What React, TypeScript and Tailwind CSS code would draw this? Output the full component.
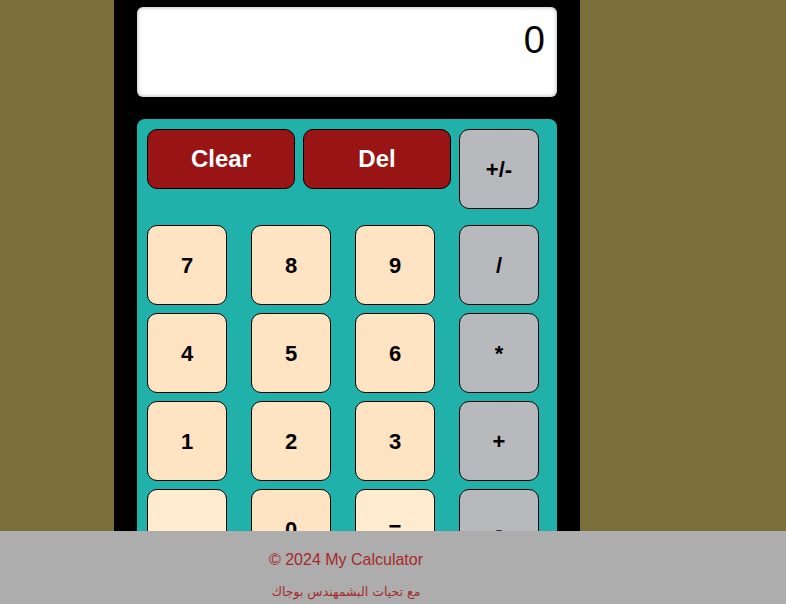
const numKey =
  'w-20 h-20 rounded-[10px] border border-black bg-[#ffe4c4] text-[22px] font-bold text-black flex items-center justify-center';
const lightKey =
  'w-20 h-20 rounded-[10px] border border-black bg-[#ffebcd] text-[22px] font-bold text-black flex items-center justify-center';
const opKey =
  'w-20 h-20 rounded-[10px] border border-black bg-[#b8b9bd] text-[22px] font-bold text-black flex items-center justify-center';
const redKey =
  'w-[148px] h-[60px] rounded-[10px] border border-black bg-[#991515] text-[24px] font-bold text-white flex items-center justify-center';

export default function App() {
  const rows = [
    ['7', '8', '9', '/'],
    ['4', '5', '6', '*'],
    ['1', '2', '3', '+'],
  ];

  return (
    <div className="min-h-screen bg-[#7a6f3a] font-['Liberation_Sans',Arial,sans-serif]">
      <div className="ml-[114px] w-[466px] min-h-[640px] bg-black pt-[7px] pl-[23px]">
        <div className="w-[420px] h-[90px] bg-white rounded-[6px] shadow-[inset_0_0_4px_rgba(0,0,0,0.35)] flex justify-end pr-3 pt-[14px]">
          <span className="text-[38px] leading-none text-black">0</span>
        </div>

        <div className="mt-[22px] w-[420px] bg-[#20b2aa] rounded-t-[8px] pt-[10px] pl-[10px] pb-10">
          <div className="flex items-start">
            <button className={redKey}>Clear</button>
            <button className={redKey + ' ml-2'}>Del</button>
            <button className={opKey + ' ml-2'}>+/-</button>
          </div>

          <div className="mt-4 grid grid-cols-[80px_80px_80px_80px] gap-x-6 gap-y-2">
            {rows.map((row) =>
              row.map((k) => (
                <button key={k} className={k === '/' || k === '*' || k === '+' ? opKey : numKey}>
                  {k}
                </button>
              ))
            )}
            <button className={lightKey}></button>
            <button className={numKey}>0</button>
            <button className={lightKey}>=</button>
            <button className={opKey}>-</button>
          </div>
        </div>
      </div>

      <footer className="fixed bottom-0 left-0 right-0 h-[73px] bg-[#adadad] pr-[94px] pt-[20px] text-center text-[#a52a2a]">
        <p className="text-[16px] leading-[18px]">© 2024 My Calculator</p>
        <p className="mt-[15px] text-[12.5px] leading-[16px] font-['DejaVu_Sans','Liberation_Sans',sans-serif]" dir="rtl">
          مع تحيات البشمهندس بوجاك
        </p>
      </footer>
    </div>
  );
}
